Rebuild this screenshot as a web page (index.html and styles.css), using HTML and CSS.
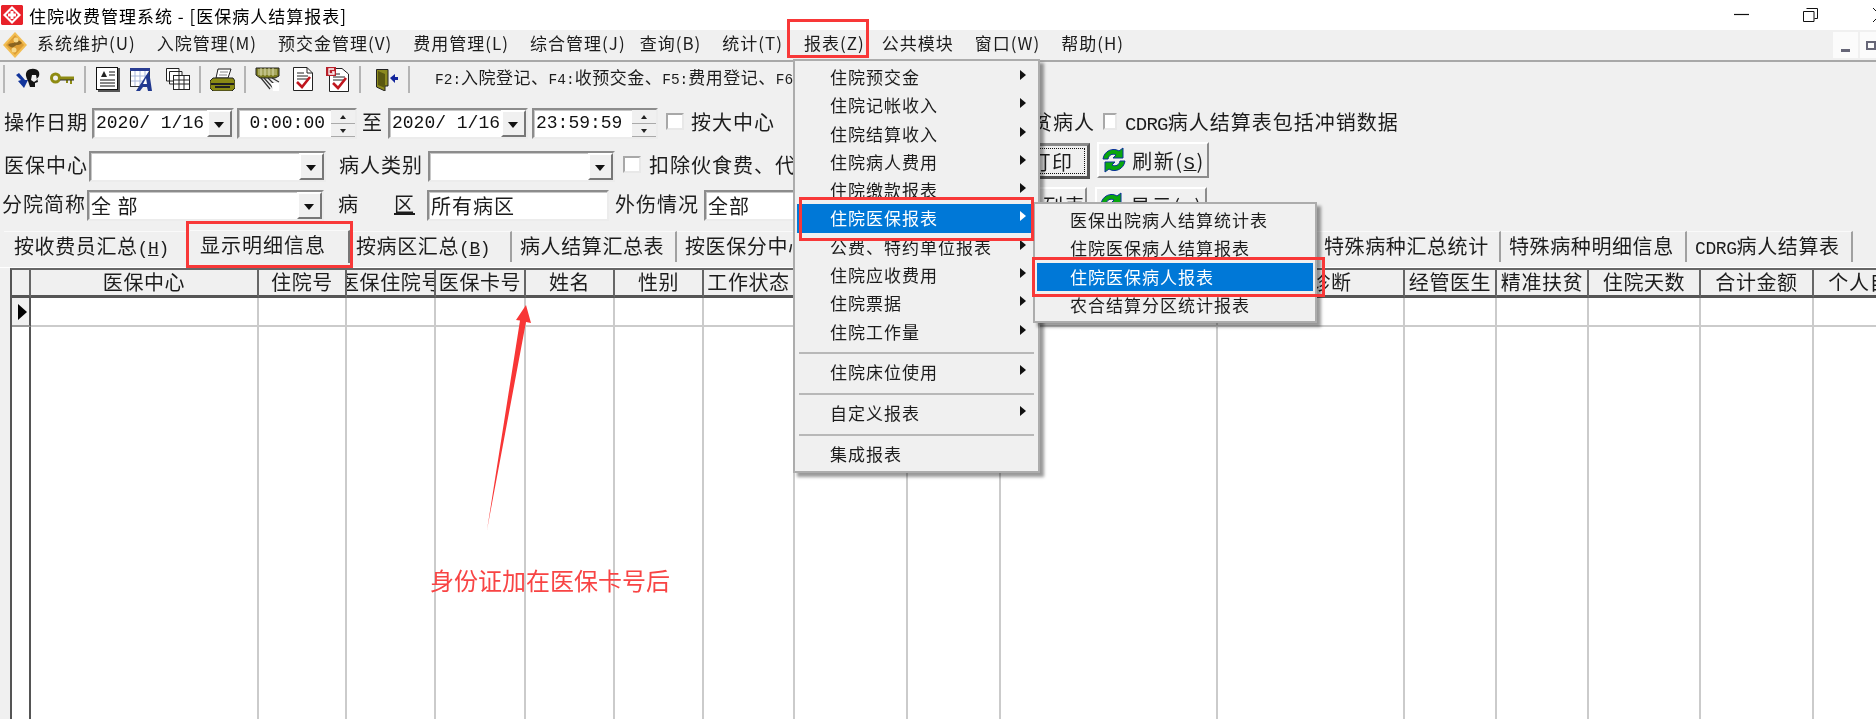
FILE: index.html
```html
<!DOCTYPE html>
<html lang="zh-CN">
<head>
<meta charset="utf-8">
<title>住院收费管理系统</title>
<link rel="stylesheet" href="styles.css">
</head>
<body>
<div class="app">
  <header class="titlebar">
    <svg class="logo" viewBox="0 0 22 20"><path d="M1 0H21L22 1V19L21 20H1L0 19V1Z" fill="#e8222a"/><path d="M11 1 20 10 11 19 2 10Z" fill="#fff"/><path d="M11 4 17 10 11 16 5 10Z" fill="#e8222a"/><path d="M9.500 6h3v2.500H15v3h-2.500V14h-3v-2.500H7v-3h2.500z" fill="#fff"/></svg>
    <span class="title">住院收费管理系统 - [医保病人结算报表]</span>
    <div class="winbtns">
      <svg class="winbtn" viewBox="0 0 16 14"><path d="M0 6.500H15" stroke="#111" stroke-width="1.200"/></svg>
      <svg class="winbtn" viewBox="0 0 16 14"><path d="M3.500.500h11v10h-3M.500 3.500h10.500v10H.500z" fill="none" stroke="#111"/></svg>
      <svg class="winbtn winbtn-x" viewBox="0 0 16 14"><path d="M0 0 14 14M14 0 0 14" stroke="#111"/></svg>
    </div>
  </header>

  <nav class="menubar">
    <svg class="appicon" viewBox="0 0 24 26"><path d="M12 0 24 13 12 26 0 13Z" fill="#f2bd52"/><path d="M12 3 21 13 12 23 3 13Z" fill="#dd9d33"/><path d="M5 13c3-3 5-1 7-3s4-2 7 1c-3 3-5 1-7 3s-4 2-7-1Z" fill="#8a6420"/><circle cx="13" cy="8" r="2.500" fill="#f7d889"/><circle cx="11" cy="18" r="2.500" fill="#f7d889"/></svg>
    <span class="menu-item">系统维护(U)</span>
    <span class="menu-item">入院管理(M)</span>
    <span class="menu-item">预交金管理(V)</span>
    <span class="menu-item">费用管理(L)</span>
    <span class="menu-item menu-item-tight">综合管理(J)</span>
    <span class="menu-item">查询(B)</span>
    <span class="menu-item">统计(T)</span>
    <span class="menu-item menu-item-snug">报表(Z)</span>
    <span class="menu-item">公共模块</span>
    <span class="menu-item">窗口(W)</span>
    <span class="menu-item">帮助(H)</span>
    <div class="mdi-btns">
      <span class="mdi-btn"><i class="mdi-min"></i></span>
      <span class="mdi-btn"><i class="mdi-restore"></i></span>
    </div>
  </nav>

  <div class="toolbar">
    <i class="grip"></i>
    <span class="tool"><svg class="ico" width="26" height="22" viewBox="0 0 26 22"><path d="M1 7 6 12 3 13 9 20 13 12 10 12 4 5Z" fill="#12359c"/><path d="M12 3C15 0 22 0 24 4 25 8 23 10 22 10L23 14 20 15 20 19 15 19 13 13C11 9 10 6 12 3Z" fill="#141414"/><path d="M17 7 21 7 22 12 19 14 16 12Z" fill="#f2f2f2"/></svg></span>
    <span class="tool"><svg class="ico" width="25" height="14" viewBox="0 0 25 14"><circle cx="5.500" cy="6" r="4" fill="none" stroke="#8e8b12" stroke-width="3"/><path d="M9 4.500H24V8H22V12H20V8H18V11H16V8H9Z" fill="#8e8b12"/><path d="M10 8H24" stroke="#333"/></svg></span>
    <i class="tool-sep"></i>
    <span class="tool"><svg class="ico" width="24" height="25" viewBox="0 0 24 25"><rect x="2" y="1" width="22" height="24" fill="#555"/><rect x=".500" y=".500" width="21" height="22" fill="#fff" stroke="#111"/><path d="M4 13h15M4 16h15M4 19h15M13 5h6M13 8h6" stroke="#111"/><path d="M8 4 11 10H5Z" fill="#222"/></svg></span>
    <span class="tool"><svg class="ico" width="25" height="25" viewBox="0 0 25 25"><rect x=".500" y="1.500" width="19" height="18" fill="#fff" stroke="#333"/><path d="M0 1H20V4H0Z" fill="#2a3d92"/><path d="M5 4V19M10 4V19M15 4V19M1 9H19M1 14H19" stroke="#a9b7da"/><path d="M19 4 22 24H18L17 20H13L10 24H6Z" fill="#20388f"/><path d="M16 11 17 17H13Z" fill="#fff"/></svg></span>
    <span class="tool"><svg class="ico" width="24" height="22" viewBox="0 0 24 22"><path d="M.500.500H13V13H.500zM3.500 3.500H16V16H3.500z" fill="#fff" stroke="#222"/><rect x="7.500" y="7.500" width="16" height="14" fill="#fff" stroke="#222"/><path d="M8 12H23M8 16H23M13 8V21M18 8V21" stroke="#222"/></svg></span>
    <i class="tool-sep"></i>
    <span class="tool"><svg class="ico" width="25" height="23" viewBox="0 0 25 23"><path d="M8 1H21L18 10H6Z" fill="#fff" stroke="#222"/><path d="M10 4H18M9 7H17" stroke="#888"/><path d="M3 10H23L25 13V20L22 23H3L0 20V13Z" fill="#8a8a14" stroke="#222"/><path d="M1 16H24M5 19H20" stroke="#222" stroke-width="2"/></svg></span>
    <i class="tool-sep"></i>
    <span class="tool"><svg class="ico" width="25" height="24" viewBox="0 0 25 24"><path d="M1 1H24V9L20 11H5L1 8Z" fill="#7c7c20" stroke="#222"/><path d="M3 3H22M3 5H22M3 7H22M6 1V9M10 1V9M14 1V9M18 1V9" stroke="#e8e8c0" stroke-width=".800"/><path d="M6 11 15 22M9 11 18 21M13 11 21 19M17 11 24 15" stroke="#333" stroke-width="1.200"/><path d="M16 16H24V24H18Z" fill="#fff"/></svg></span>
    <span class="tool"><svg class="ico" width="20" height="24" viewBox="0 0 20 24"><path d="M.500.500H14L19.500 6V23.500H.500Z" fill="#fff" stroke="#222"/><path d="M14 .500V6H19.500M4 6H11M4 9H15M4 12H15" fill="none" stroke="#222"/><path d="M4 15 9 20 17 10" fill="none" stroke="#c0161e" stroke-width="2.600"/></svg></span>
    <span class="tool"><svg class="ico" width="23" height="25" viewBox="0 0 23 25"><path d="M3.500 1.500H16L22.500 7V24.500H3.500Z" fill="#fff" stroke="#222"/><path d="M8 7H14M7 10H19M7 13H19" stroke="#222"/><rect x="0" y="0" width="10" height="9" fill="#b8202a"/><path d="M8 2H3V7H8V5H6" fill="none" stroke="#fff" stroke-width="1.300"/><path d="M7 16 12 21 20 11" fill="none" stroke="#c0161e" stroke-width="2.600"/></svg></span>
    <i class="tool-sep"></i>
    <span class="tool tool-door"><svg class="ico" width="22" height="23" viewBox="0 0 22 23"><path d="M.500 1.500H12V18H9V23L.500 19Z" fill="#8c8a1e" stroke="#222"/><path d="M2 3 9 6V20L2 17Z" fill="#5a5810"/><path d="M14 10 19 6V9H22V12H19V15Z" fill="#12259c"/></svg></span>
    <i class="tool-sep"></i>
    <span class="hint"><span class="lat">F2:</span>入院登记、<span class="lat">F4:</span>收预交金、<span class="lat">F5:</span>费用登记、<span class="lat">F6:</span>结算</span>
  </div>

  <form class="form">
    <div class="row row-1">
      <label class="lbl lbl-4">操作日期</label>
      <div class="field f-date"><span class="val lat-l">2020/ 1/16</span><span class="drop"></span></div>
      <div class="field f-time"><span class="val val-r lat-l">0:00:00</span><span class="spin"><i class="up"></i><i class="down"></i></span></div>
      <label class="lbl lbl-to">至</label>
      <div class="field f-date2"><span class="val lat-l">2020/ 1/16</span><span class="drop"></span></div>
      <div class="field f-time2"><span class="val lat-l">23:59:59</span><span class="spin"><i class="up"></i><i class="down"></i></span></div>
      <span class="check"></span>
      <label class="lbl lbl-big">按大中心</label>
      <label class="lbl lbl-poor">精准扶贫病人</label>
      <span class="check check-cdrg"></span>
      <label class="lbl lbl-cdrg"><span class="lat-c">CDRG</span>病人结算表包括冲销数据</label>
    </div>
    <div class="row row-2">
      <label class="lbl lbl-4">医保中心</label>
      <div class="field f-center"><span class="val"></span><span class="drop"></span></div>
      <label class="lbl lbl-kind">病人类别</label>
      <div class="field f-kind"><span class="val"></span><span class="drop"></span></div>
      <span class="check check-deduct"></span>
      <label class="lbl lbl-deduct">扣除伙食费、代收费用</label>
      <button type="button" class="btn btn-print"><span class="focus">打印</span></button>
      <button type="button" class="btn btn-refresh">
        <svg class="refresh" viewBox="0 0 26 26"><path d="M2 12C3 4 12 0 18 4L22 1V11H12L15 8C11 6 8 8 7 12Z" fill="#08a60e" stroke="#0a2e9c"/><path d="M24 14C23 22 14 26 8 22L4 25V15H14L11 18C15 20 18 18 19 14Z" fill="#08a60e" stroke="#0a2e9c"/></svg>
        <span>刷新(<u>S</u>)</span>
      </button>
    </div>
    <div class="row row-3">
      <label class="lbl lbl-4 lbl-branch">分院简称</label>
      <div class="field f-center"><span class="val val-cn">全 部</span><span class="drop"></span></div>
      <label class="lbl lbl-ward">病<span class="ward-gap"></span><u>区</u></label>
      <div class="field f-ward"><span class="val val-cn">所有病区</span></div>
      <label class="lbl lbl-injury">外伤情况</label>
      <div class="field f-injury"><span class="val val-cn">全部</span><span class="drop"></span></div>
      <button type="button" class="btn btn-list">打印列表</button>
      <button type="button" class="btn btn-show">
        <svg class="refresh" viewBox="0 0 26 26"><path d="M2 12C3 4 12 0 18 4L22 1V11H12L15 8C11 6 8 8 7 12Z" fill="#08a60e" stroke="#0a2e9c"/><path d="M24 14C23 22 14 26 8 22L4 25V15H14L11 18C15 20 18 18 19 14Z" fill="#08a60e" stroke="#0a2e9c"/></svg>
        <span>显示(<u>X</u>)</span>
      </button>
    </div>
  </form>

  <div class="tabs">
    <span class="tab tab-first">按收费员汇总<span class="lat-t">(<u>H</u>)</span></span>
    <span class="tab tab-on">显示明细信息</span>
    <span class="tab tab-ward">按病区汇总<span class="lat-t">(<u>B</u>)</span></span>
    <span class="tab">病人结算汇总表</span>
    <span class="tab">按医保分中心汇总</span>
    <span class="tab">公费特约单位汇总</span>
    <span class="tab">精准扶贫病人汇总</span>
    <span class="tab">特殊病种汇总统计</span>
    <span class="tab">特殊病种明细信息</span>
    <span class="tab"><span class="lat-t">CDRG</span>病人结算表</span>
  </div>

  <div class="panel">
    <div class="grid">
      <div class="hd hd-corner"></div><div class="hd">医保中心</div><div class="hd">住院号</div><div class="hd hd-clip">医保住院号</div><div class="hd">医保卡号</div><div class="hd">姓名</div><div class="hd">性别</div><div class="hd">工作状态</div><div class="hd">年龄</div><div class="hd">病区</div><div class="hd">入院日期</div><div class="hd">入院诊断</div><div class="hd">经管医生</div><div class="hd">精准扶贫</div><div class="hd">住院天数</div><div class="hd">合计金额</div><div class="hd">个人自付</div>
      <div class="ind"><i class="ind-arrow"></i></div><div class="cell"></div><div class="cell"></div><div class="cell"></div><div class="cell"></div><div class="cell"></div><div class="cell"></div><div class="cell"></div><div class="cell"></div><div class="cell"></div><div class="cell"></div><div class="cell"></div><div class="cell"></div><div class="cell"></div><div class="cell"></div><div class="cell"></div><div class="cell"></div>
      <div class="fill fill-ind"></div><div class="fill"></div><div class="fill"></div><div class="fill"></div><div class="fill"></div><div class="fill"></div><div class="fill"></div><div class="fill"></div><div class="fill"></div><div class="fill"></div><div class="fill"></div><div class="fill"></div><div class="fill"></div><div class="fill"></div><div class="fill"></div><div class="fill"></div><div class="fill"></div>
    </div>
  </div>

  <div class="popup popup-main">
    <div class="pi sub">住院预交金</div>
    <div class="pi sub">住院记帐收入</div>
    <div class="pi sub">住院结算收入</div>
    <div class="pi sub">住院病人费用</div>
    <div class="pi sub">住院缴款报表</div>
    <div class="pi sub pi-on">住院医保报表</div>
    <div class="pi sub">公费、特约单位报表</div>
    <div class="pi sub">住院应收费用</div>
    <div class="pi sub">住院票据</div>
    <div class="pi sub">住院工作量</div>
    <div class="psep"></div>
    <div class="pi sub">住院床位使用</div>
    <div class="psep"></div>
    <div class="pi sub">自定义报表</div>
    <div class="psep"></div>
    <div class="pi">集成报表</div>
  </div>
  <div class="popup popup-sub">
    <div class="pi">医保出院病人结算统计表</div>
    <div class="pi">住院医保病人结算报表</div>
    <div class="pi pi-on">住院医保病人报表</div>
    <div class="pi">农合结算分区统计报表</div>
  </div>

  <i class="mark mark-menu"></i>
  <i class="mark mark-tab"></i>
  <i class="mark mark-item"></i>
  <i class="mark mark-subitem"></i>

  <svg class="arrow" width="50" height="230" viewBox="0 0 50 230"><path d="M41 0 46 18 41 17 2 225 35 15.500 31 15Z" fill="#f83636"/></svg>
  <p class="note">身份证加在医保卡号后</p>
</div>
</body>
</html>
```

FILE: styles.css
```css
* { box-sizing: border-box; }
html, body { margin: 0; padding: 0; background: #fff; }
body { overflow: hidden; }

.app {
  position: relative;
  width: 1876px;
  height: 719px;
  overflow: hidden;
  display: flex;
  flex-direction: column;
  background: #f0f0f0;
  color: #1c1c1c;
  font-family: "Noto Sans CJK SC", "Liberation Sans", sans-serif;
  font-size: 17px;
  filter: blur(0.35px);
}

/* title bar */
.titlebar { flex: 0 0 30px; display: flex; align-items: center; background: #fff; padding-left: 1px; }
.logo { width: 22px; height: 20px; }
.title { margin-left: 6px; font-size: 17px; letter-spacing: 1px; color: #000; white-space: nowrap; }
.winbtns { margin-left: auto; display: flex; align-items: center; }
.winbtn { width: 16px; height: 14px; margin-right: 54px; }
.winbtn-x { margin-right: -13px; }
.winbtn:first-child { margin-right: 53px; }

/* menu bar */
.menubar { flex: 0 0 32px; display: flex; align-items: center; padding: 0 0 6px 3px; border-bottom: 2px solid #a8a8a8; margin-bottom: 0; height: 32px; }
.appicon { width: 24px; height: 26px; margin: 5px 10px 0 0; }
.menu-item { margin-right: 21px; letter-spacing: 1px; white-space: nowrap; }
.menu-item-tight { margin-right: 14px; }
.menu-item-snug { margin-right: 17px; }
.mdi-btns { margin-left: auto; display: flex; gap: 2px; height: 26px; margin-top: 5px; }
.mdi-btn { width: 25px; background: #fbfbfb; display: flex; align-items: flex-end; justify-content: center; padding-bottom: 6px; }
.mdi-btn:last-child { width: 16px; justify-content: flex-start; padding-left: 6px; padding-bottom: 8px; }
.mdi-min { width: 9px; height: 3px; background: #667; }
.mdi-restore { width: 10px; height: 9px; border: 2px solid #667; }

/* toolbar */
.toolbar { flex: 0 0 36px; display: flex; align-items: center; padding: 0 0 2px 3px; }
.grip { width: 2px; height: 28px; margin-right: 5px; background: #b8b8b8; }
.tool { width: 35px; display: flex; align-items: center; justify-content: center; }
.tool-door { margin-left: 4px; }
.ico { display: block; }
.tool-sep { width: 2px; height: 27px; margin: 0 4px; background: #b4b4b4; }
.hint { margin-left: 21px; margin-top: -5px; font-size: 17px; letter-spacing: .5px; white-space: nowrap; }
.lat { font-family: "Liberation Mono", monospace; font-size: 14.500px; letter-spacing: 0; }

/* filter form */
.form { flex: 0 0 127px; display: flex; flex-direction: column; padding-top: 10px; }
.row { display: flex; align-items: flex-start; white-space: nowrap; }
.row-1 { height: 34px; padding-left: 4px; }
.row-2 { height: 45px; padding-left: 4px; }
.row-3 { height: 38px; padding-left: 2px; }
.row-2 .field, .row-2 .lbl { margin-top: 9px; }
.row-3 .field, .row-3 .lbl { margin-top: 3px; }
.lbl { height: 28px; line-height: 28px; font-size: 20px; letter-spacing: 1px; flex: none; }
.lat-l { font-family: "Liberation Mono", monospace; font-size: 18px; letter-spacing: 0; color: #111; }
.lat-c { font-family: "Liberation Mono", monospace; font-size: 19px; letter-spacing: -.7px; }
.lbl-4 { width: 84px; }
.lbl-to { width: 21px; margin: 0 5px; }
.lbl-big { width: 84px; margin-left: 7px; }
.lbl-poor { width: 126px; margin-left: 194px; }
.lbl-cdrg { margin-left: 8px; }
.lbl-kind { width: 85px; margin-left: 13px; margin-right: 4px; }
.lbl-deduct { width: 331px; margin-left: 8px; overflow: hidden; }
.lbl-ward { width: 74px; margin-left: 14px; margin-right: 15px; }
.ward-gap { display: inline-block; width: 35px; }
.lbl-injury { width: 84px; margin-left: 6px; margin-right: 5px; }

.field {
  height: 31px; flex: none; display: flex; align-items: stretch;
  background: #fff;
  border: 2px solid; border-color: #8c8c8c #ececec #ececec #8c8c8c;
  box-shadow: inset 1px 1px 0 #c8c8c8;
}
.val { flex: 1; min-width: 0; padding-left: 2px; line-height: 27px; white-space: pre; }
.val-r { text-align: right; padding-right: 6px; }
.val-cn { font-size: 20px; letter-spacing: 1px; padding-left: 2px; }
.f-date { width: 142px; margin-left: 4px; }
.f-time { width: 120px; margin-left: 3px; }
.f-date2 { width: 140px; }
.f-time2 { width: 126px; margin-left: 4px; }
.f-center { width: 237px; margin-left: 1px; }
.f-kind { width: 187px; }
.f-ward { width: 182px; }
.f-injury { width: 275px; }

.drop {
  position: relative; flex: 0 0 25px;
  background: #f0f0f0;
  border: 2px solid; border-color: #fff #777 #777 #fff;
}
.drop::after {
  content: ""; position: absolute; left: 5px; top: 10px;
  border: 5px solid transparent; border-top: 6px solid #111; border-bottom: 0;
}
.spin { flex: 0 0 24px; display: flex; flex-direction: column; background: #f0f0f0; }
.spin i { flex: 1; position: relative; border-bottom: 1px solid #aaa; }
.spin i::after { content: ""; position: absolute; left: 9px; top: 5px; border: 3px solid transparent; }
.spin .up::after { border-bottom: 4px solid #222; border-top: 0; }
.spin .down::after { border-top: 4px solid #222; border-bottom: 0; }
.check {
  flex: none; width: 18px; height: 17px; margin: 5px 0 0 8px;
  background: #fff; border: 2px solid; border-color: #a8a8a8 #e8e8e8 #e8e8e8 #a8a8a8;
}
.check-cdrg { width: 14px; margin-left: 8px; }
.row-2 .check-deduct { margin: 14px 0 0 8px; }

.btn {
  flex: none; padding: 0; font: inherit; font-size: 20px; letter-spacing: 1.500px; color: inherit;
  background: #f0f0f0; border: 2px solid; border-color: #fff #8c8c8c #8c8c8c #fff;
  display: flex; align-items: center; justify-content: center;
}
.btn-print { width: 110px; height: 36px; border: 3px solid; border-color: #8a8a8a #555 #555 #8a8a8a; margin-top: 1px; }
.btn-print .focus { display: flex; align-items: center; justify-content: center; width: 100px; height: 26px; border: 1px dotted #111; padding-left: 34px; }
.btn-refresh { width: 112px; height: 36px; margin-left: 7px; gap: 5px; padding-right: 0; }
.btn-list { width: 110px; height: 36px; margin-left: -2px; padding-left: 22px; }
.btn-show { width: 112px; height: 36px; margin-left: 8px; gap: 5px; padding-right: 0; }
.refresh { width: 26px; height: 26px; }
.btn u { font-family: "Liberation Mono", monospace; font-size: 19px; }

/* tabs */
.tabs {
  flex: 0 0 43px;
  display: grid;
  grid-template-columns: 186px 160px 162px 165px 193px 220px 226px 185px 186px 166px;
  align-items: end;
  padding-left: 4px;
  padding-bottom: 5px;
  border-bottom: 1px solid #fff;
}
.tab {
  height: 31px; line-height: 28px; padding-left: 8px;
  font-size: 20px; letter-spacing: .6px; white-space: nowrap;
  border-top: 1px solid #fafafa; border-right: 2px solid #a0a0a0;
}
.tab-first { padding-left: 10px; border-right-color: #f0f0f0; }
.tab-on { height: 33px; line-height: 27px; padding-left: 10px; letter-spacing: 1px; border-right-color: #777; margin-bottom: -1px; }
.tab-ward { padding-left: 6px; }
.lat-t { font-family: "Liberation Mono", monospace; font-size: 18px; letter-spacing: -.4px; }

/* grid */
.panel { flex: 1; min-height: 0; padding-left: 10px; display: flex; }
.grid {
  flex: 1; min-width: 0;
  display: grid;
  grid-template-columns: 19px 228px 88px 89px 90px 89px 89px 91px 113px 93px 217px 187px 92px 92px 112px 113px 113px;
  grid-template-rows: 28px 29px 1fr;
  background: #fff;
  border-left: 2px solid #555;
  border-top: 2px solid #666;
}
.hd {
  display: flex; align-items: center; justify-content: center; white-space: nowrap;
  font-size: 20px; letter-spacing: .6px;
  background: #f0f0f0;
  border-right: 2px solid #666;
  border-bottom: 3px solid #555;
  min-width: 0;
  padding-bottom: 2px;
}
.hd-clip { overflow: hidden; }
.ind { position: relative; background: #f0f0f0; border-right: 2px solid #555; border-bottom: 2px solid #999; }
.ind-arrow { position: absolute; left: 6px; top: 6px; border: 8px solid transparent; border-left: 9px solid #000; border-right: 0; }
.cell { border-right: 2px solid #cbcbcb; border-bottom: 2px solid #cbcbcb; }
.fill { border-right: 2px solid #cbcbcb; }
.fill-ind { border-right-color: #555; }

/* drop-down menus */
.popup {
  position: absolute; background: #f0f0f0; border: 2px solid #acacac;
  box-shadow: 4px 4px 3px rgba(0,0,0,.4);
  display: flex; flex-direction: column; padding: 2px;
}
.popup-main { left: 793px; top: 59px; width: 247px; height: 414px; }
.popup-sub { left: 1033px; top: 202px; width: 284px; height: 121px; }
.pi {
  position: relative; height: 28.300px; line-height: 28px; padding-left: 33px; flex: none;
  letter-spacing: 1px; white-space: nowrap;
}
.pi-on { background: #0078d7; color: #fff; }
.sub::after {
  content: ""; position: absolute; left: 223px; top: 7px;
  border: 5px solid transparent; border-left: 6px solid #111; border-right: 0;
}
.pi-on.sub::after { border-left-color: #fff; }
.psep { flex: none; height: 12.500px; position: relative; margin: 0 2px; }
.psep::after { content: ""; position: absolute; left: 0; right: 0; top: 6px; height: 2px; background: #b8b8b8; }

/* review marks */
.mark { position: absolute; border: 3px solid #f83838; }
.mark-menu { left: 787px; top: 19px; width: 82px; height: 39px; }
.mark-tab { left: 186px; top: 221px; width: 167px; height: 47px; }
.mark-item { left: 799px; top: 197px; width: 235px; height: 44px; }
.mark-subitem { left: 1032px; top: 257px; width: 293px; height: 40px; }
.arrow { position: absolute; left: 485px; top: 305px; }
.note {
  position: absolute; left: 430px; top: 563px; margin: 0;
  font-size: 24px; line-height: 34px; color: #f84444; white-space: nowrap;
}
```
